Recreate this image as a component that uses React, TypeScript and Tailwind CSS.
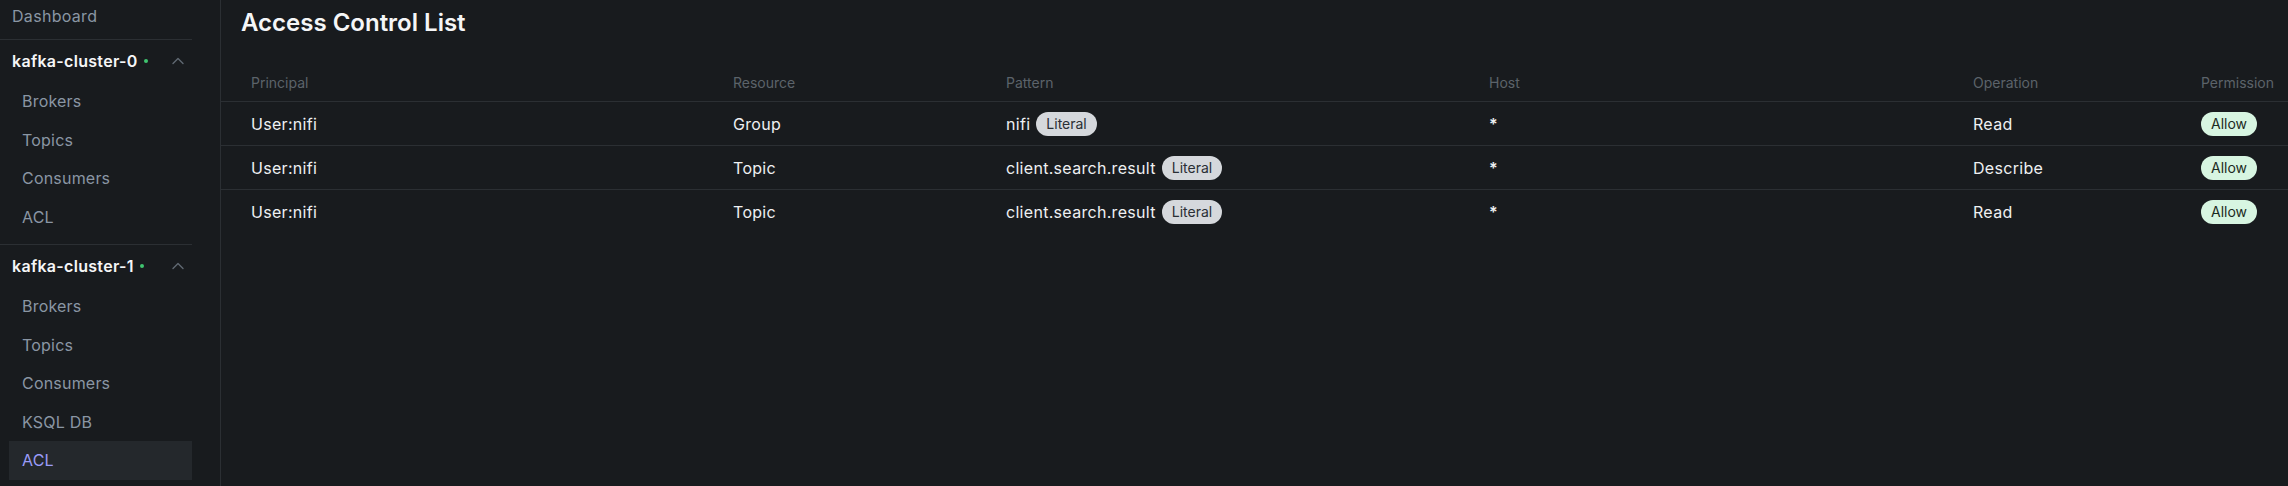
import React from "react";

const font = { fontFamily: "Inter, 'Noto Sans', sans-serif" };

function Chevron() {
  return (
    <svg width="12" height="8" viewBox="0 0 12 8" fill="none" className="ml-auto mr-[8px]">
      <path d="M1 6.5 L6 1.5 L11 6.5" stroke="#5f6872" strokeWidth="1.4" strokeLinecap="round" strokeLinejoin="round" />
    </svg>
  );
}

function ClusterHeader({ name }: { name: string }) {
  return (
    <div className="h-[42px] flex items-center pl-[12px]">
      <span className="text-[16px] font-semibold text-[#f5f6f7] leading-6 tracking-[0.3px]">{name}</span>
      <span className="ml-[6px] w-[4px] h-[4px] rounded-full bg-[#3fc46f]" />
      <Chevron />
    </div>
  );
}

function Item({ label, active }: { label: string; active?: boolean }) {
  return (
    <div
      className={
        "h-[38.5px] ml-[9px] pl-[13px] flex items-center text-[16px] leading-6 tracking-[0.2px] " +
        (active ? "bg-[#24282c] text-[#9a9cf7]" : "text-[#8a96a4]")
      }
    >
      {label}
    </div>
  );
}

const rows = [
  { principal: "User:nifi", resource: "Group", pattern: "nifi", host: "*", op: "Read", perm: "Allow" },
  { principal: "User:nifi", resource: "Topic", pattern: "client.search.result", host: "*", op: "Describe", perm: "Allow" },
  { principal: "User:nifi", resource: "Topic", pattern: "client.search.result", host: "*", op: "Read", perm: "Allow" },
];

const grid = "grid grid-cols-[482px_273px_483px_484px_228px_1fr] pl-[20px]";

export default function App() {
  return (
    <div className="w-[2288px] h-[486px] bg-[#181b1e] flex overflow-hidden" style={font}>
      <aside className="w-[221px] shrink-0 border-r border-[#2b2f33] h-full">
        <div className="w-[192px]">
          <div className="h-[40px] border-b border-[#2b2f33] pl-[12px] pt-[4px] text-[16px] leading-6 tracking-[0.3px] text-[#8a96a4]">
            Dashboard
          </div>
          <div className="border-b border-[#2b2f33] pb-[8px]">
            <ClusterHeader name="kafka-cluster-0" />
            {["Brokers", "Topics", "Consumers", "ACL"].map((it) => (
              <Item key={it} label={it} />
            ))}
          </div>
          <div>
            <ClusterHeader name="kafka-cluster-1" />
            {["Brokers", "Topics", "Consumers", "KSQL DB", "ACL"].map((it) => (
              <Item key={it} label={it} active={it === "ACL"} />
            ))}
          </div>
        </div>
      </aside>
      <main className="flex-1 min-w-0 pt-[7px]">
        <h1 className="pl-[20px] text-[24px] leading-8 font-semibold text-[#f5f6f7]">Access Control List</h1>
        <div className="mt-[18px]">
          <div className={grid + " h-[45px] items-end pb-[8px] border-b border-[#2b2f33] text-[14px] leading-5 text-[#5c636a]"}>
            {["Principal", "Resource", "Pattern", "Host", "Operation", "Permission"].map((h) => (
              <div key={h} className="px-[10px] whitespace-nowrap">{h}</div>
            ))}
          </div>
          {rows.map((r, i) => (
            <div
              key={i}
              className={
                grid +
                " h-[44px] items-center text-[16px] leading-6 tracking-[0.3px] text-[#eef0f2] " +
                (i < rows.length - 1 ? "border-b border-[#2b2f33]" : "")
              }
            >
              <div className="px-[10px]">{r.principal}</div>
              <div className="px-[10px]">{r.resource}</div>
              <div className="px-[10px] flex items-center gap-[6px]">
                <span>{r.pattern}</span>
                <span className="h-[24px] px-[10px] rounded-full bg-[#d5d8dc] text-[#2a2f35] text-[14px] leading-6 tracking-normal">Literal</span>
              </div>
              <div className="px-[10px] font-semibold">{r.host}</div>
              <div className="px-[10px]">{r.op}</div>
              <div className="px-[10px] flex">
                <span className="h-[24px] px-[10px] rounded-full bg-[#d7f5e1] text-[#1c2a21] text-[14px] leading-6 tracking-normal">{r.perm}</span>
              </div>
            </div>
          ))}
        </div>
      </main>
    </div>
  );
}
